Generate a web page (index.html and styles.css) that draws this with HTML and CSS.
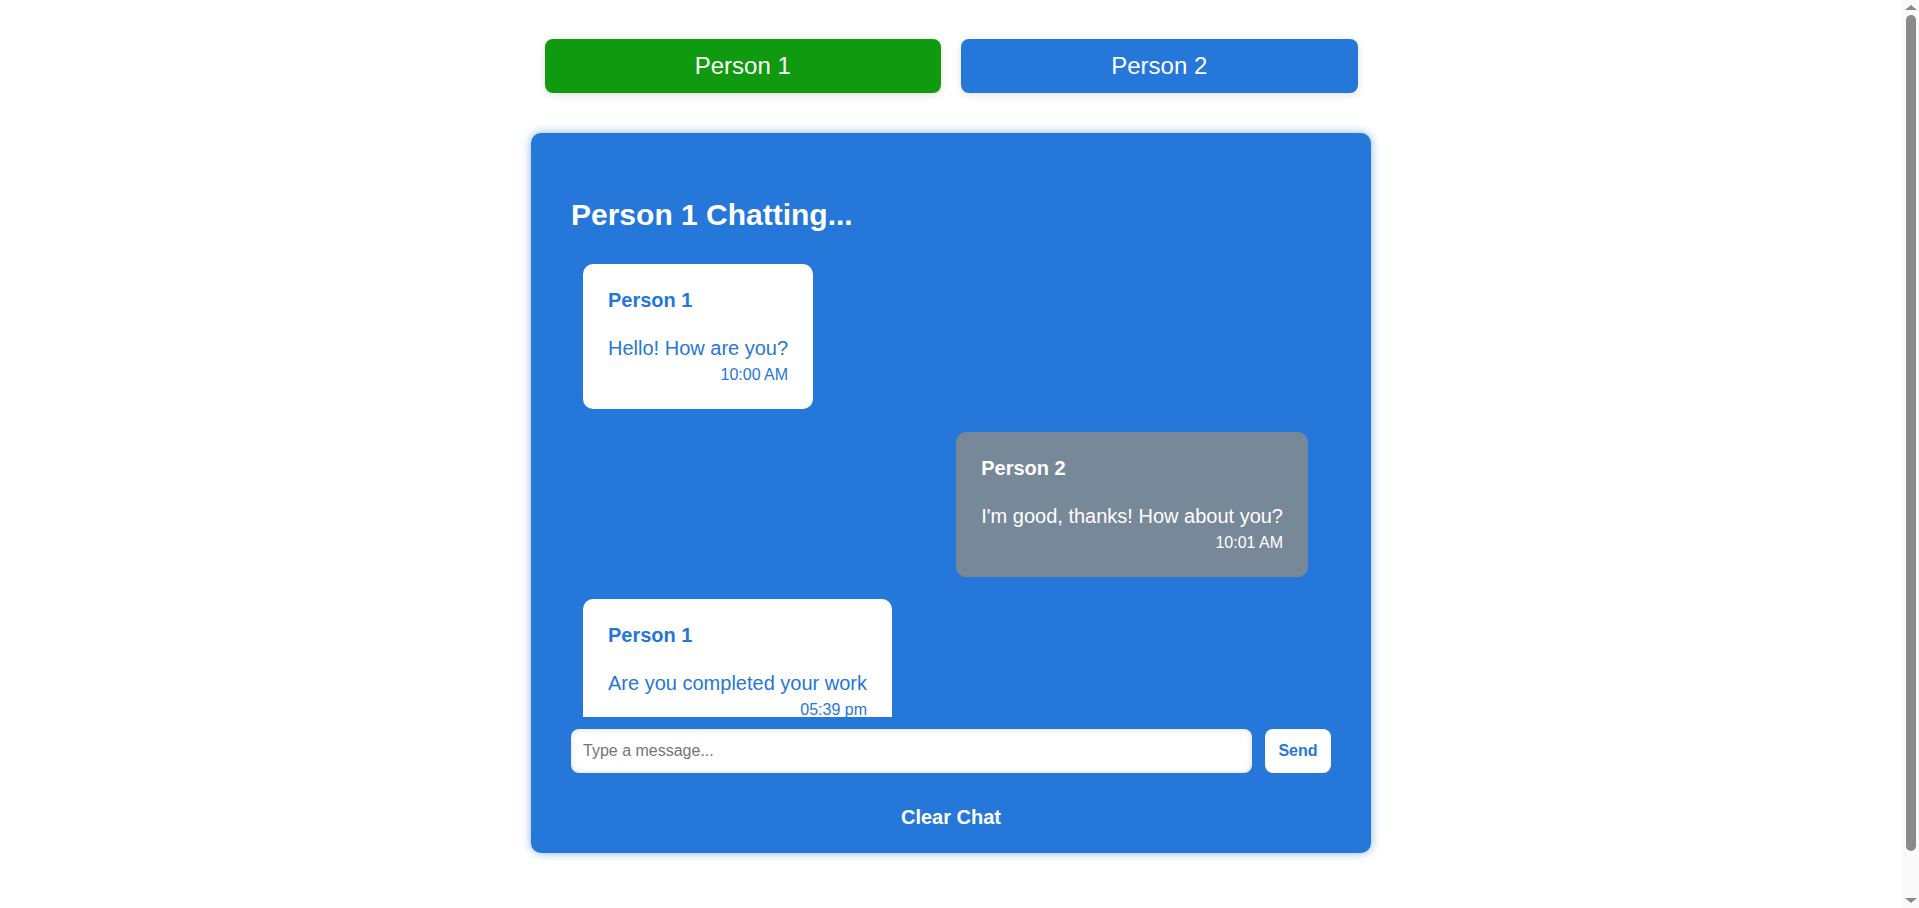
FILE: index.html
```html
<!DOCTYPE html>
<html lang="en">
<head>
<meta charset="utf-8">
<title>Chat</title>
<link rel="stylesheet" href="styles.css">
</head>
<body>
<div class="page">
  <div class="tabs">
    <button class="tab tab-green">Person 1</button>
    <button class="tab tab-blue">Person 2</button>
  </div>
  <div class="chat">
    <h2 class="chat-title">Person 1 Chatting...</h2>
    <div class="messages">
      <div class="msg msg-mine">
        <div class="msg-name">Person 1</div>
        <div class="msg-text">Hello! How are you?</div>
        <div class="msg-time">10:00 AM</div>
      </div>
      <div class="msg msg-other">
        <div class="msg-name">Person 2</div>
        <div class="msg-text">I'm good, thanks! How about you?</div>
        <div class="msg-time">10:01 AM</div>
      </div>
      <div class="msg msg-mine">
        <div class="msg-name">Person 1</div>
        <div class="msg-text">Are you completed your work</div>
        <div class="msg-time">05:39 pm</div>
      </div>
    </div>
    <div class="composer">
      <input class="composer-input" type="text" placeholder="Type a message...">
      <button class="send">Send</button>
    </div>
    <button class="clear">Clear Chat</button>
  </div>
</div>
<div class="scrollbar" aria-hidden="true">
  <div class="scroll-arrow scroll-arrow-up"></div>
  <div class="scroll-track"><div class="scroll-thumb"></div></div>
  <div class="scroll-arrow scroll-arrow-down"></div>
</div>
</body>
</html>
```
FILE: styles.css
```css
* { box-sizing: border-box; }

html, body {
  margin: 0;
  padding: 0;
  background: #ffffff;
  font-family: "Liberation Sans", Arial, sans-serif;
}

.page {
  padding: 39px 17px 96px 0;
}

.tabs {
  width: 813px;
  margin: 0 auto 40px;
  display: flex;
  gap: 20px;
}

.tab {
  flex: 1;
  height: 54px;
  border: none;
  border-radius: 8px;
  color: #ffffff;
  font-family: inherit;
  font-size: 24px;
  line-height: 28px;
  box-shadow: 0 2px 8px rgba(0, 0, 0, 0.12);
  cursor: pointer;
}

.tab-green { background: #109a10; }
.tab-blue { background: #2577d9; }

.chat {
  width: 840px;
  margin: 0 auto;
  background: #2577d9;
  border-radius: 10px;
  padding: 40px 40px 14px;
  box-shadow: 0 0 10px rgba(37, 119, 217, 0.55);
}

.chat-title {
  margin: 25px 0;
  color: #ffffff;
  font-size: 30px;
  line-height: 34px;
  font-weight: bold;
}

.messages {
  height: 460px;
  overflow: hidden;
  display: flex;
  flex-direction: column;
  gap: 22.5px;
  padding: 7px 23px 0 12px;
}

.msg {
  flex-shrink: 0;
  width: fit-content;
  padding: 25px;
  border-radius: 10px;
}

.msg-mine {
  align-self: flex-start;
  background: #ffffff;
  color: #2577d9;
}

.msg-other {
  align-self: flex-end;
  background: #778899;
  color: #ffffff;
}

.msg-name {
  font-size: 20px;
  line-height: 23px;
  font-weight: bold;
  margin-bottom: 25px;
}

.msg-text {
  font-size: 20px;
  line-height: 23px;
  white-space: nowrap;
}

.msg-time {
  margin-top: 6px;
  font-size: 16px;
  line-height: 18px;
  text-align: right;
}

.composer {
  margin-top: 12px;
  display: flex;
  gap: 13px;
}

.composer-input {
  flex: 1;
  height: 44px;
  border: none;
  border-radius: 8px;
  padding: 0 12px;
  font-family: inherit;
  font-size: 16px;
  color: #333333;
  background: #ffffff;
  box-shadow: inset 0 0 6px rgba(0, 0, 0, 0.15);
  outline: none;
}

.composer-input::placeholder { color: #757575; }

.send {
  width: 66px;
  height: 44px;
  border: none;
  border-radius: 8px;
  background: #ffffff;
  color: #2577d9;
  font-family: inherit;
  font-size: 16px;
  font-weight: bold;
  padding: 0;
  cursor: pointer;
}

.clear {
  display: block;
  margin: 23px auto 0;
  padding: 10px;
  border: none;
  background: transparent;
  color: #ffffff;
  font-family: inherit;
  font-size: 20px;
  line-height: 23px;
  font-weight: bold;
  cursor: pointer;
}

/* imitation of the browser's classic scrollbar */
.scrollbar {
  position: fixed;
  top: 0;
  right: 0;
  width: 17px;
  height: 100vh;
  background: #fafafa;
  display: flex;
  flex-direction: column;
  align-items: center;
}

.scroll-arrow {
  height: 15px;
  width: 17px;
  display: flex;
  align-items: center;
  justify-content: center;
}

.scroll-arrow::before {
  content: "";
  width: 0;
  height: 0;
  border-left: 6px solid transparent;
  border-right: 6px solid transparent;
}

.scroll-arrow-up::before { border-bottom: 5px solid #8a8a8a; }
.scroll-arrow-down::before { border-top: 5px solid #8a8a8a; }

.scroll-track {
  flex: 1;
  width: 17px;
  display: flex;
  justify-content: center;
}

.scroll-thumb {
  width: 10px;
  height: 836px;
  border-radius: 5px;
  background: #8a8a8a;
}
```
